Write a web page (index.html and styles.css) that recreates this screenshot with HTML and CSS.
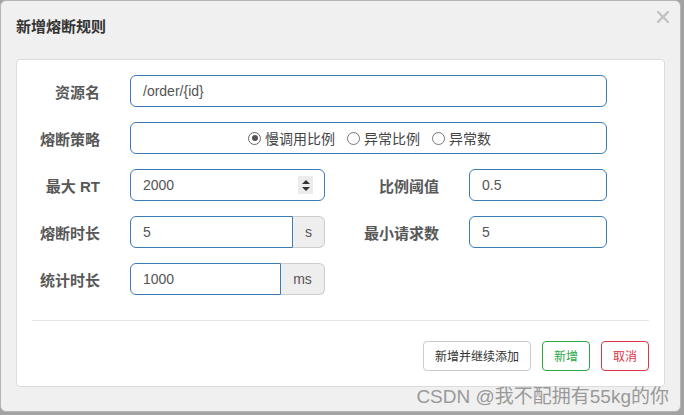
FILE: index.html
```html
<!DOCTYPE html>
<html lang="zh-CN">
<head>
<meta charset="utf-8">
<title>新增熔断规则</title>
<link rel="stylesheet" href="styles.css">
</head>
<body>
<div class="modal">
  <div class="modal-header">
    <h4 class="modal-title">新增熔断规则</h4>
    <button class="close" type="button" aria-label="关闭">
      <svg width="12" height="12" viewBox="0 0 12 12"><path d="M1 1 L11 11 M11 1 L1 11" stroke="#c3c3c3" stroke-width="2.4" stroke-linecap="square"/></svg>
    </button>
  </div>
  <div class="panel">
    <div class="form">
      <label class="label">资源名</label>
      <div class="input wide">/order/{id}</div>

      <label class="label">熔断策略</label>
      <div class="input wide radios">
        <span class="radio-item"><span class="radio checked"></span>慢调用比例</span>
        <span class="radio-item"><span class="radio"></span>异常比例</span>
        <span class="radio-item"><span class="radio"></span>异常数</span>
      </div>

      <label class="label">最大 RT</label>
      <div class="input number"><span>2000</span><span class="spinner"><span class="tri-up"></span><span class="tri-down"></span></span></div>
      <label class="label">比例阈值</label>
      <div class="input">0.5</div>

      <label class="label">熔断时长</label>
      <div class="group"><div class="input grouped">5</div><span class="addon addon-s">s</span></div>
      <label class="label">最小请求数</label>
      <div class="input">5</div>

      <label class="label">统计时长</label>
      <div class="group"><div class="input grouped">1000</div><span class="addon addon-ms">ms</span></div>
    </div>
    <hr class="divider">
    <div class="footer">
      <button class="btn btn-default" type="button">新增并继续添加</button>
      <button class="btn btn-green" type="button">新增</button>
      <button class="btn btn-red" type="button">取消</button>
    </div>
  </div>
  <div class="watermark">CSDN @我不配拥有55kg的你</div>
</div>
</body>
</html>
```

FILE: styles.css
```css
html, body {
  margin: 0;
  padding: 0;
}
body {
  width: 684px;
  height: 415px;
  overflow: hidden;
  background: #a2a2a2;
  font-family: "Liberation Sans", "Noto Sans CJK SC", sans-serif;
}
.modal {
  position: relative;
  box-sizing: border-box;
  width: 681px;
  height: 412px;
  background: #f0f0f0;
  border: 1px solid #b4b4b4;
  border-radius: 6px;
}
.modal-header {
  box-sizing: border-box;
  height: 58px;
  padding: 15px 15px 0;
}
.modal-title {
  margin: 0;
  font-size: 15px;
  line-height: 22px;
  font-weight: bold;
  color: #333;
}
.close {
  position: absolute;
  top: 10px;
  right: 11px;
  width: 12px;
  height: 12px;
  padding: 0;
  border: 0;
  background: none;
  display: flex;
}
.panel {
  margin: 0 15px;
  background: #fff;
  border: 1px solid #dcdcdc;
  border-radius: 4px;
}
.form {
  display: grid;
  grid-template-columns: 83px 195px 84px 138px;
  grid-auto-rows: 32px;
  column-gap: 30px;
  row-gap: 15px;
  padding-top: 15px;
}
.label {
  align-self: center;
  text-align: right;
  font-size: 15px;
  font-weight: bold;
  color: #585858;
  line-height: 20px;
  padding-top: 4px;
  white-space: nowrap;
}
.input {
  box-sizing: border-box;
  height: 32px;
  border: 1px solid #3a7bb8;
  border-radius: 6px;
  padding: 0 12px;
  display: flex;
  align-items: center;
  font-size: 14px;
  color: #555;
  background: #fff;
}
.wide {
  grid-column: 2 / 5;
}
.radios {
  justify-content: center;
  gap: 12px;
  padding-left: 14px;
  color: #444;
}
.radio-item {
  display: flex;
  align-items: center;
  gap: 4px;
}
.radio {
  box-sizing: border-box;
  width: 13px;
  height: 13px;
  border: 1px solid #777;
  border-radius: 50%;
  display: flex;
  align-items: center;
  justify-content: center;
}
.radio.checked {
  border: 1.5px solid #666;
}
.radio.checked::after {
  content: "";
  width: 6px;
  height: 6px;
  border-radius: 50%;
  background: #555;
}
.number {
  justify-content: space-between;
  padding-right: 11px;
}
.spinner {
  width: 15px;
  height: 18px;
  background: #ececec;
  display: flex;
  flex-direction: column;
  align-items: center;
  justify-content: center;
  gap: 3px;
}
.tri-up {
  width: 0;
  height: 0;
  border-left: 4px solid transparent;
  border-right: 4px solid transparent;
  border-bottom: 4px solid #333;
}
.tri-down {
  width: 0;
  height: 0;
  border-left: 4px solid transparent;
  border-right: 4px solid transparent;
  border-top: 4px solid #333;
}
.group {
  display: flex;
  height: 32px;
}
.grouped {
  flex: 1;
  border-radius: 6px 0 0 6px;
}
.addon {
  box-sizing: border-box;
  height: 32px;
  display: flex;
  align-items: center;
  justify-content: center;
  background: #eee;
  border: 1px solid #ccc;
  border-left: 0;
  border-radius: 0 6px 6px 0;
  font-size: 14px;
  color: #555;
}
.addon-s {
  width: 32px;
}
.addon-ms {
  width: 44px;
}
.divider {
  margin: 25px 15px 0;
  border: 0;
  border-top: 1px solid #e5e5e5;
  height: 0;
}
.footer {
  display: flex;
  justify-content: flex-end;
  gap: 11px;
  padding: 20px 15px 15px;
}
.btn {
  box-sizing: border-box;
  height: 30px;
  padding: 0 11px;
  border-radius: 4px;
  background: #fff;
  font-family: "Noto Sans CJK SC", "Liberation Sans", sans-serif;
  font-size: 12px;
  line-height: 28px;
  cursor: pointer;
}
.btn-default {
  border: 1px solid #ccc;
  color: #333;
}
.btn-green {
  border: 1px solid #28a745;
  color: #28a745;
}
.btn-red {
  border: 1px solid #dc3545;
  color: #dc3545;
}
.watermark {
  position: absolute;
  right: 11px;
  top: 385px;
  font-size: 19px;
  line-height: 22px;
  color: #999;
  white-space: nowrap;
}
```
